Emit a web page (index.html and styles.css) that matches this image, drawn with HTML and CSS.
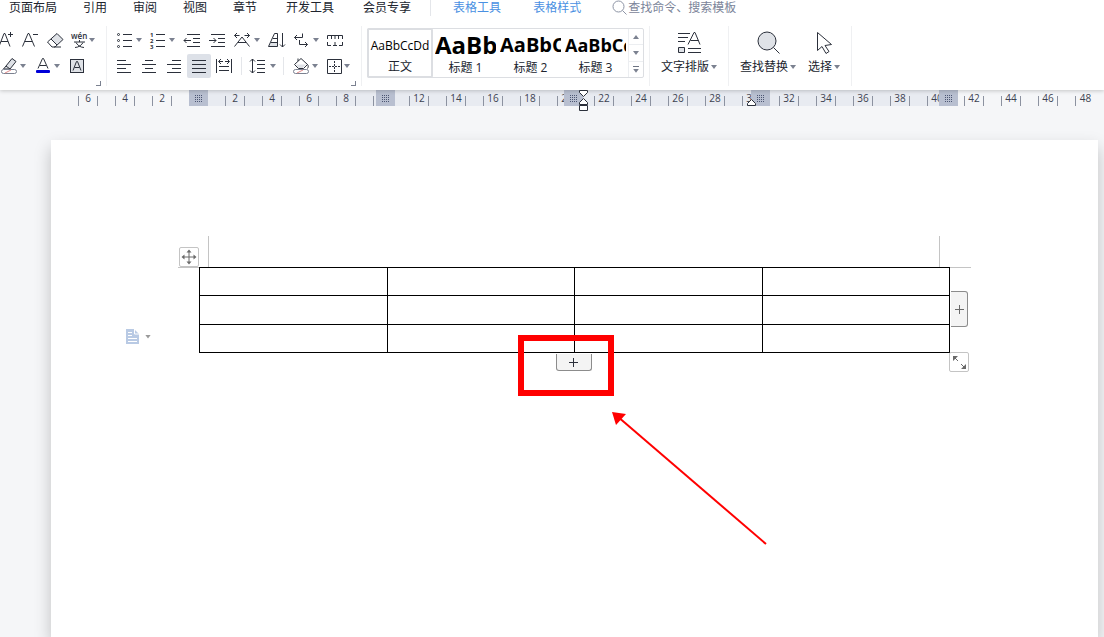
FILE: index.html
```
<!DOCTYPE html>
<html lang="zh-CN">
<head>
  <meta charset="UTF-8">
  <meta name="viewport" content="width=device-width, initial-scale=1.0">
  <title>文字文稿</title>
  <link rel="stylesheet" href="styles.css">
</head>
<body>
  <nav class="tabs">
    <a class="tab tab-wide" href="#">页面布局</a>
    <a class="tab" href="#">引用</a>
    <a class="tab" href="#">审阅</a>
    <a class="tab" href="#">视图</a>
    <a class="tab" href="#">章节</a>
    <a class="tab tab-wide" href="#">开发工具</a>
    <a class="tab tab-wide" href="#">会员专享</a>
    <span class="tab-line"></span>
    <a class="tab tab-table" href="#">表格工具</a>
    <a class="tab tab-table" href="#">表格样式</a>
    <label class="search">
      <svg width="16" height="16" viewBox="0 0 16 16"><circle cx="6.5" cy="6.5" r="5.5"/><path d="M10.500 10.500l4 4"/></svg>
      <input type="text" aria-label="搜索" placeholder="查找命令、搜索模板">
    </label>
  </nav>

  <div class="ribbon">
    <div class="group group-font">
      <div class="row">
        <button class="btn" aria-label="增大字号"><svg class="icon" viewBox="0 0 24 24"><path d="M5 18.500l5-13h1l5 13M7 13.500h7M14 6.500h5M16.500 4v5"/></svg></button>
        <button class="btn" aria-label="减小字号"><svg class="icon" viewBox="0 0 24 24"><path d="M4.500 18.500l5.500-13h1l5.500 13M7 13.500h7M15 6.500h5"/></svg></button>
        <button class="btn" aria-label="清除格式"><svg class="icon" viewBox="0 0 24 24"><path class="fill" d="M9 11l6-5.500 6 6-6 5.500z"/><path d="M5.500 14l9.500-8.500 6 6-8 7.500h-3zM9 11l6 6M12 19h7"/></svg></button>
        <button class="btn" aria-label="拼音指南"><svg class="icon" viewBox="0 0 24 24"><text class="pinyin" x="5" y="11">wén</text><path d="M8 14h11M13.500 12v2M10 14.500c1 2 4 5 8 5M17 14.500c-1 2-4 5-8 5"/></svg><i class="caret"></i></button>
      </div>
      <div class="row row-second">
        <button class="btn" aria-label="突出显示"><svg class="icon" viewBox="0 0 24 24"><path class="fill" d="M8 13l7-9 4 3-7 9h-4z"/><path d="M9 12l6-7.500 4 3-6 7.500H6.500l2.500-3zM9 12l4 3"/><rect class="none" x="4.500" y="15.500" width="15" height="4" rx="2"/><path class="red" d="M8 19l6-3"/></svg><i class="caret"></i></button>
        <button class="btn" aria-label="字体颜色"><svg class="icon" viewBox="0 0 24 24"><path d="M7 14.500l4.500-10h1l4.500 10M9 11.500h6"/><rect class="blue" x="5" y="16" width="14" height="3" rx="1"/></svg><i class="caret"></i></button>
        <button class="btn" aria-label="字符底纹"><svg class="icon" viewBox="0 0 24 24"><rect class="fill line" x="5.500" y="5.500" width="13" height="13"/><path d="M8 16.500l3.500-9h1l3.500 9M9.500 13.500h5"/></svg></button>
      </div>
      <button class="launcher" aria-label="字体设置"></button>
    </div>

    <div class="group group-para">
      <div class="row row-para">
        <button class="btn" aria-label="项目符号"><svg class="icon" viewBox="0 0 24 24"><path d="M10 6.500h9M10 12.500h9M10 18.500h9"/><circle cx="5.500" cy="6.500" r="1"/><circle cx="5.500" cy="12.500" r="1"/><circle cx="5.500" cy="18.500" r="1"/></svg><i class="caret"></i></button>
        <button class="btn" aria-label="编号"><svg class="icon" viewBox="0 0 24 24"><path d="M10 6.500h9M10 12.500h9M10 18.500h9"/><text class="digit" x="4" y="9">1</text><text class="digit" x="4" y="15">2</text><text class="digit" x="4" y="21">3</text></svg><i class="caret"></i></button>
        <button class="btn" aria-label="减少缩进"><svg class="icon" viewBox="0 0 24 24"><path d="M8 6.500h13M14 10.500h7M14 14.500h7M8 18.500h13M5 12.500h7M7.500 10l-2.500 2.500 2.500 2.500"/></svg></button>
        <button class="btn" aria-label="增加缩进"><svg class="icon" viewBox="0 0 24 24"><path d="M6 6.500h14M13 10.500h7M13 14.500h7M6 18.500h14M4 12.500h7M8.500 10l2.500 2.500-2.500 2.500"/></svg></button>
        <button class="btn" aria-label="中文版式"><svg class="icon" viewBox="0 0 24 24"><path d="M3.500 7.500h5M6 5L3.500 7.500 6 10M13.500 7.500h5M16 5l2.500 2.500L16 10M3.500 18.500L11 9l7.500 9.500M7 14.500h8"/></svg><i class="caret"></i></button>
        <button class="btn" aria-label="排序"><svg class="icon" viewBox="0 0 24 24"><path class="fill" d="M7 14.500h6v4H4.500z"/><path d="M4.500 18.500l6-13h3v13zM7 14.500h6M9 10.500h4M18.500 5v14M16 16.500l2.500 2.500 2.500-2.500"/></svg></button>
        <button class="btn" aria-label="换行符"><svg class="icon" viewBox="0 0 24 24"><path d="M4.500 9.500h8v-4M7 7L4.500 9.500 7 12M9.500 12v4.500h8M15 14l2.500 2.500L15 19"/></svg><i class="caret"></i></button>
        <button class="btn" aria-label="制表位"><svg class="icon" viewBox="0 0 24 24"><path d="M4.500 11V7.500h15V11M8.500 8v3M12 8v3M15.500 8v3M4.500 14v3.500H8M10 17.500h4M12 14v3M16 17.500h3.500V14"/></svg></button>
      </div>
      <div class="row row-second row-align">
        <button class="btn" aria-label="左对齐"><svg class="icon" viewBox="0 0 24 24"><path d="M5 6.500h9M5 10.500h14M5 14.500h9M5 18.500h14"/></svg></button>
        <button class="btn" aria-label="居中"><svg class="icon" viewBox="0 0 24 24"><path d="M8 6.500h8M5 10.500h14M8 14.500h8M5 18.500h14"/></svg></button>
        <button class="btn" aria-label="右对齐"><svg class="icon" viewBox="0 0 24 24"><path d="M10 6.500h9M5 10.500h14M10 14.500h9M5 18.500h14"/></svg></button>
        <button class="btn btn-on" aria-label="两端对齐" aria-pressed="true"><svg class="icon" viewBox="0 0 24 24"><path d="M5 6.500h14M5 10.500h14M5 14.500h14M5 18.500h14"/></svg></button>
        <button class="btn" aria-label="分散对齐"><svg class="icon" viewBox="0 0 24 24"><path d="M4.500 5v14M19.500 5v14M7 7.500h4M13 7.500h4M9 5L6.500 7.500 9 10M15 5l2.500 2.500L15 10M7 12.500h10M7 16.500h10"/></svg></button>
        <span class="row-line"></span>
        <button class="btn" aria-label="行距"><svg class="icon" viewBox="0 0 24 24"><path d="M5.500 5v14M3 7.500L5.500 5 8 7.500M3 16.500L5.500 19 8 16.500M10 6.500h8M10 10.500h8M10 14.500h8M10 18.500h8"/></svg><i class="caret"></i></button>
        <span class="row-line"></span>
        <button class="btn" aria-label="底纹颜色"><svg class="icon" viewBox="0 0 24 24"><path class="fill" d="M7 10.500h10l-4 4H10z"/><path d="M9.500 14.500l-4-4 6.500-6 6.500 6-4 4zM9 7V4.500M18.500 10.500c1 1 1 2.500 0 4"/><rect class="none" x="4.500" y="15.500" width="15" height="4" rx="2"/><path class="red" d="M8 19l6-3"/></svg><i class="caret"></i></button>
        <button class="btn" aria-label="边框"><svg class="icon" viewBox="0 0 24 24"><path d="M6.500 5.500h14v14h-14z"/><path stroke-dasharray="2 1" d="M8 12.500h11M13.500 7v11"/></svg><i class="caret"></i></button>
      </div>
      <button class="launcher" aria-label="段落设置"></button>
    </div>

    <div class="group group-style">
      <div class="gallery">
        <button class="style style-on"><span class="sample">AaBbCcDd</span><span class="name">正文</span></button>
        <button class="style"><span class="sample sample-1">AaBb</span><span class="name">标题 1</span></button>
        <button class="style"><span class="sample sample-2">AaBbC</span><span class="name">标题 2</span></button>
        <button class="style"><span class="sample sample-3">AaBbCc</span><span class="name">标题 3</span></button>
        <div class="scroller">
          <button aria-label="上一行"><i class="caret caret-up"></i></button>
          <button aria-label="下一行"><i class="caret"></i></button>
          <button class="more" aria-label="更多样式"><i class="caret"></i></button>
        </div>
      </div>
    </div>

    <div class="group group-big">
      <button class="big">
        <svg width="28" height="28" viewBox="0 0 28 28"><path d="M3 5.500h12M3 9.500h10M3 13.500h7M13 16.500l6-12h1l5 12M15.500 12.500h8M13 20.500h13M13 24.500h13"/><path class="fill line" d="M3.500 19.500h6v5h-6z"/></svg>
        <span class="big-name">文字排版<i class="caret"></i></span>
      </button>
    </div>
    <div class="group group-big group-find">
      <button class="big">
        <svg width="28" height="28" viewBox="0 0 28 28"><circle class="fill line" cx="13" cy="13" r="9"/><path d="M19.500 19.500l6 6"/></svg>
        <span class="big-name">查找替换<i class="caret"></i></span>
      </button>
      <button class="big">
        <svg width="28" height="28" viewBox="0 0 28 28"><path d="M7.500 4.500v18l4.500-4 4 7 3-2-4-6 6.500-1z"/></svg>
        <span class="big-name">选择<i class="caret"></i></span>
      </button>
    </div>
  </div>

  <div class="ruler">
    <div class="scale">
      <span class="unit">6</span><span class="unit">4</span><span class="unit">2</span><span class="unit unit-zero"></span>
      <span class="unit">2</span><span class="unit">4</span><span class="unit">6</span><span class="unit">8</span><span class="unit unit-zero"></span>
      <span class="unit">12</span><span class="unit">14</span><span class="unit">16</span><span class="unit">18</span><span class="unit">20</span>
      <span class="unit">22</span><span class="unit">24</span><span class="unit">26</span><span class="unit">28</span><span class="unit">30</span>
      <span class="unit">32</span><span class="unit">34</span><span class="unit">36</span><span class="unit">38</span><span class="unit">40</span>
      <span class="unit">42</span><span class="unit">44</span><span class="unit">46</span><span class="unit unit-last">48</span>
    </div>
    <i class="stop stop-0"></i>
    <i class="stop stop-1"></i>
    <i class="stop stop-2"></i>
    <i class="stop stop-3"></i>
    <i class="stop stop-4"></i>
    <svg class="indent indent-left" width="11" height="22" viewBox="0 0 11 22"><path d="M1.500.5h8v2l-4 4-4-4zM5.500 8.500l4 4v2h-8v-2zM1.500 15.500h8v5h-8z"/></svg>
    <svg class="indent indent-right" width="11" height="22" viewBox="0 0 11 22"><path d="M5.500 9.500l4 4v2h-8v-2z"/></svg>
  </div>

  <main class="workspace">
    <div class="page">
      <div class="table-box">
        <table class="grid">
          <tr><td></td><td></td><td></td><td></td></tr>
          <tr><td></td><td></td><td></td><td></td></tr>
          <tr><td></td><td></td><td></td><td></td></tr>
        </table>
        <i class="crop crop-left"></i>
        <i class="crop crop-right"></i>
        <button class="handle move" aria-label="移动表格"><svg width="18" height="18" viewBox="0 0 18 18"><path d="M9 3v12M3 9h12"/><path class="solid" d="M9 1.500l2.500 3h-5zM9 16.500l2.500-3h-5zM1.500 9l3-2.500v5zM16.500 9l-3-2.500v5z"/></svg></button>
        <button class="handle resize" aria-label="缩放表格"><svg width="18" height="18" viewBox="0 0 18 18"><path d="M4 4l4 4M11 11l4 4"/><path class="solid" d="M3 3h5L3 8zM16 16h-5l5-5z"/></svg></button>
        <button class="add add-col" aria-label="添加列"><svg width="11" height="11" viewBox="0 0 11 11"><path d="M5.500 1v9M1 5.500h9"/></svg></button>
        <button class="add add-row" aria-label="添加行"><svg width="11" height="11" viewBox="0 0 11 11"><path d="M5.500 1v9M1 5.500h9"/></svg></button>
        <button class="layout-tip" aria-label="段落布局"><svg width="13" height="15" viewBox="0 0 13 15"><path class="sheet" d="M0 0h8l5 5v10H0z"/><path class="text" d="M2 3.500h4M2 6.500h4M2 9.500h9M2 12.500h9M8.500 0v5H13"/></svg><i class="caret"></i></button>
        <div class="mark"></div>
        <svg class="arrow" width="160" height="136" viewBox="0 0 160 136"><path class="shaft" d="M7 6l149 128"/><path class="head" d="M2 2l14 2-10 11z"/></svg>
      </div>
    </div>
  </main>
</body>
</html>
```
FILE: styles.css
```
*{
  box-sizing: border-box;
}
body{
  margin: 0;
  min-height: 100vh;
  display: flex;
  flex-direction: column;
  overflow: hidden;
  background: #f5f6f8;
  color: #20242e;
  font-family: "Open Sans", "Noto Sans CJK SC", sans-serif;
  font-size: 12px;
}
button,input{
  margin: 0;
  padding: 0;
  border: none;
  background: none;
  color: inherit;
  font: inherit;
}
a{
  color: inherit;
  text-decoration: none;
}
svg{
  display: block;
  flex: none;
  fill: none;
  stroke: #2b303b;
}
svg text{
  fill: #2b303b;
  stroke: none;
}
.pinyin{
  font-size: 8px;
  font-weight: 600;
}
.digit{
  font-size: 6px;
  font-weight: bold;
}
.fill{
  fill: #dfe2e7;
  stroke: none;
}
.line{
  stroke: #2b303b;
}
.none{
  fill: #fff;
  stroke: #7b8190;
}
.red{
  stroke: #e08a8a;
}
.blue{
  fill: #0000d8;
  stroke: none;
}

/* 标签栏 */
.tabs{
  position: relative;
  z-index: 2;
  display: flex;
  height: 16px;
  margin-left: -7px;
  background: #fff;
  line-height: 16px;
  white-space: nowrap;
}
.tab{
  padding: 0 13px;
}
.tab-wide{
  padding-left: 16px;
}
.tab-table{
  padding: 0 16px;
  color: #4a90e2;
}
.tab-line{
  width: 1px;
  margin: 0 6px;
  background: #e4e6ea;
}
.search{
  display: flex;
  margin-left: 15px;
}
.search svg{
  stroke: #8d94a5;
}
.search input{
  width: 140px;
  height: 16px;
  outline: none;
}
.search input::placeholder{
  color: #7b8499;
  opacity: 1;
}

/* 功能区 */
.ribbon{
  position: relative;
  z-index: 1;
  display: flex;
  height: 74px;
  padding: 10px 0 4px;
  background: #fff;
  box-shadow: 0 1px 4px rgba(0, 0, 0, .2);
}
.group{
  display: flex;
  flex: none;
  border-right: 1px solid #eff0f2;
}
.group-font,
.group-para{
  flex-direction: column;
  padding-top: 2px;
}
.group-font{
  width: 107px;
}
.group-para{
  width: 255px;
}
.row{
  display: flex;
  margin-left: -6px;
}
.row-second{
  gap: 3px;
  margin: 2px 0 0 -3px;
}
.row-para{
  gap: 2px;
  margin-left: 6px;
}
.row-align{
  gap: 1px;
  margin-left: 5px;
}
.row-line{
  width: 1px;
  height: 18px;
  margin: 3px 4px;
  background: #e4e6ea;
}
.btn{
  display: flex;
  align-items: center;
  flex: none;
}
.btn-on{
  background: #dde1e8;
  border-radius: 2px;
}
.icon{
  width: 24px;
  height: 24px;
}
.caret{
  flex: none;
  width: 6px;
  height: 4px;
  background: #7b8190;
  clip-path: polygon(0 0, 100% 0, 50% 100%);
}
.btn .caret{
  margin: 0 2px 0 -1px;
}
.caret-up{
  transform: rotate(180deg);
}
.launcher{
  width: 5px;
  height: 5px;
  margin: 3px 5px 0 auto;
  border-right: 1px solid #7b8190;
  border-bottom: 1px solid #7b8190;
}
.group-style{
  padding: 2px 5px;
}
.gallery{
  display: flex;
  height: 50px;
  border: 1px solid #dcdee2;
  border-radius: 2px;
}
.style{
  display: flex;
  flex-direction: column;
  width: 65px;
  padding: 0 2px;
  text-align: center;
}
.style-on{
  margin: -1px 0 -1px -1px;
  width: 66px;
  padding: 0;
  border: 2px solid #dcdee2;
  border-radius: 2px;
}
.sample{
  height: 32px;
  line-height: 32px;
  overflow: hidden;
  color: #000;
  text-align: left;
  white-space: nowrap;
}
.style-on .sample{
  height: 30px;
  text-align: center;
}
.sample-1,
.sample-2,
.sample-3{
  font-weight: bold;
}
.sample-1{
  font-size: 24px;
}
.sample-2{
  font-size: 20px;
}
.sample-3{
  font-size: 18px;
}
.name{
  line-height: 14px;
}
.scroller{
  display: flex;
  flex-direction: column;
  width: 15px;
  border-left: 1px solid #eceef1;
}
.scroller button{
  display: flex;
  flex: 1;
  flex-direction: column;
  align-items: center;
  justify-content: center;
  border-bottom: 1px solid #eceef1;
}
.scroller .more{
  gap: 2px;
  border-bottom: none;
}
.more::before{
  content: "";
  width: 6px;
  height: 1px;
  background: #6d7382;
}
.group-big{
  gap: 12px;
  padding: 2px 11px 0;
}
.big{
  display: flex;
  flex-direction: column;
  align-items: center;
}
.big-name{
  display: flex;
  align-items: center;
  gap: 2px;
  margin-top: 3px;
  line-height: 16px;
}

/* 标尺 */
.ruler{
  position: relative;
  height: 16px;
  background: linear-gradient(90deg, transparent 199px, #e8ebf1 199px, #e8ebf1 958px, transparent 958px);
}
.scale{
  display: flex;
  height: 16px;
  padding-left: 78px;
  gap: 17px;
  overflow: hidden;
  align-items: flex-end;
}
.unit{
  flex: none;
  width: 20px;
  height: 10px;
  border: solid #8c92a0;
  border-width: 0 1px;
  color: #3c4250;
  font-size: 10px;
  line-height: 4px;
  text-align: center;
}
.unit-zero{
  width: 19px;
  border-right: none;
}
.unit-last{
  border-right: none;
}
.stop{
  position: absolute;
  top: 0;
  width: 19px;
  height: 16px;
  background: #b8bfd0;
}
.stop::before{
  content: "";
  position: absolute;
  left: 5px;
  top: 5px;
  width: 8px;
  height: 8px;
  background: conic-gradient(#4b5572 25%, transparent 0) 0 0 / 2px 2px;
}
.stop-0{
  left: 189px;
}
.stop-1{
  left: 376px;
}
.stop-2{
  left: 564px;
}
.stop-3{
  left: 751px;
}
.stop-4{
  left: 939px;
}
.indent{
  position: absolute;
  z-index: 2;
  top: 0;
  fill: #fff;
}
.indent-left{
  left: 578px;
}
.indent-right{
  left: 746px;
}

/* 文档 */
.workspace{
  flex: 1;
  display: flex;
  padding: 34px 6px 0 51px;
}
.page{
  flex: 1;
  padding: 127px 148px 0;
  background: #fff;
  box-shadow: 0 8px 16px rgba(0, 0, 0, .22);
}
.table-box{
  position: relative;
  z-index: 0;
}
.grid{
  width: 100%;
  height: 86px;
  table-layout: fixed;
  border-collapse: collapse;
}
.grid td{
  padding: 0;
  border: 1px solid #000;
}
.crop{
  position: absolute;
  z-index: -1;
  top: -31px;
  height: 32px;
  border-bottom: 1px solid #c4c4c4;
}
.crop-left{
  left: -21px;
  width: 31px;
  border-right: 1px solid #c4c4c4;
}
.crop-right{
  right: -21px;
  width: 32px;
  border-left: 1px solid #c4c4c4;
}
.handle{
  position: absolute;
  width: 20px;
  height: 20px;
  border: 1px solid #c4c4c4;
  border-radius: 2px;
  background: #fff;
}
.handle svg{
  stroke: #6a6a6a;
}
.handle .solid{
  fill: #6a6a6a;
  stroke: none;
}
.move{
  left: -20px;
  top: -20px;
}
.resize{
  right: -19px;
  bottom: -19px;
}
.add{
  position: absolute;
  display: flex;
  align-items: center;
  justify-content: center;
  border: 1px solid #8c8c8c;
  background: #f4f4f4;
}
.add-col{
  right: -18px;
  top: 24px;
  width: 17px;
  height: 36px;
  border-left: none;
  border-radius: 0 3px 3px 0;
}
.add-col svg{
  stroke: #6a6a6a;
}
.add-row{
  left: calc(50% - 19px);
  top: 87px;
  width: 36px;
  height: 17px;
  border-top: none;
  border-radius: 0 0 3px 3px;
}
.layout-tip{
  position: absolute;
  left: -73px;
  top: 62px;
  display: flex;
  align-items: center;
  gap: 6px;
}
.layout-tip .sheet{
  fill: #b9cae4;
  stroke: none;
}
.layout-tip .text{
  stroke: #fff;
}
.layout-tip .caret{
  background: #9a9a9a;
}
.mark{
  position: absolute;
  left: calc(50% - 57px);
  top: 68px;
  width: 96px;
  height: 61px;
  border: 6px solid #f00;
}
.arrow{
  position: absolute;
  left: calc(50% + 35px);
  top: 143px;
}
.arrow .shaft{
  stroke: #f00;
  stroke-width: 2;
}
.arrow .head{
  fill: #f00;
  stroke: none;
}
```
